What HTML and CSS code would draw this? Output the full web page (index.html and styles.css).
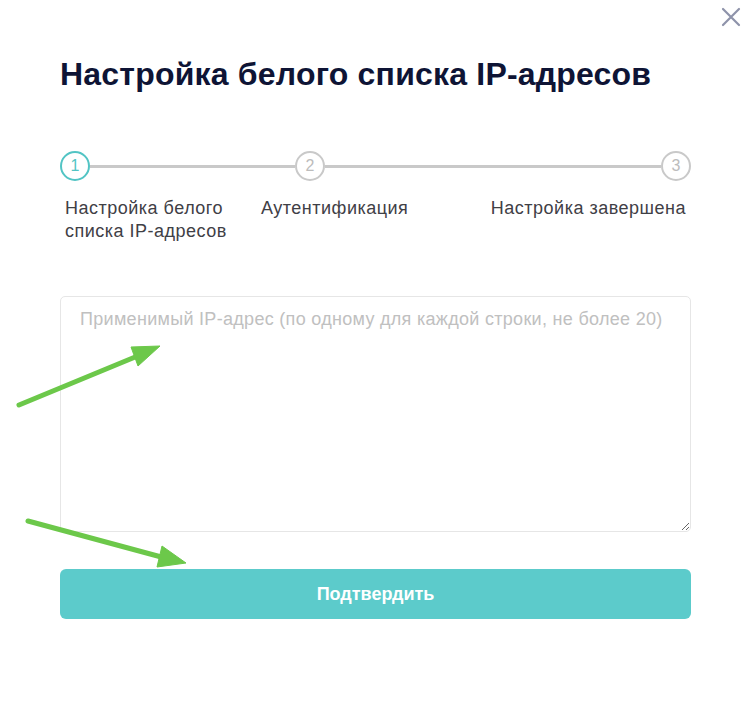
FILE: index.html
```html
<!DOCTYPE html>
<html lang="ru">
<head>
<meta charset="utf-8">
<title>Настройка белого списка IP-адресов</title>
<link rel="stylesheet" href="styles.css">
</head>
<body>
<div class="modal">
  <button class="close" aria-label="Закрыть">
    <svg width="20" height="20" viewBox="0 0 20 20"><path d="M2 2L18 18M18 2L2 18" stroke="#8e93aa" stroke-width="2.2" stroke-linecap="round" fill="none"/></svg>
  </button>
  <h1 class="title">Настройка белого списка IP-адресов</h1>

  <div class="steps">
    <div class="track">
      <span class="dot active">1</span>
      <span class="line first"></span>
      <span class="dot">2</span>
      <span class="line"></span>
      <span class="dot">3</span>
    </div>
    <div class="labels">
      <div class="label l1">Настройка белого<br>списка IP-адресов</div>
      <div class="label l2">Аутентификация</div>
      <div class="label l3">Настройка завершена</div>
    </div>
  </div>

  <textarea class="ips" placeholder="Применимый IP-адрес (по одному для каждой строки, не более 20)"></textarea>

  <button class="confirm">Подтвердить</button>
</div>

<svg class="arrows" width="750" height="720" viewBox="0 0 750 720">
  <g fill="#6cc84a" stroke="#6cc84a">
    <line x1="19" y1="405" x2="140" y2="355" stroke-width="5" stroke-linecap="round"/>
    <polygon points="160,346 131,347 138,366" stroke-width="1" stroke-linejoin="round"/>
    <line x1="28" y1="521" x2="165" y2="558" stroke-width="5" stroke-linecap="round"/>
    <polygon points="186,563 162,546 157,567" stroke-width="1" stroke-linejoin="round"/>
  </g>
</svg>
</body>
</html>
```

FILE: styles.css
```css
html, body {
  margin: 0;
  padding: 0;
  background: #ffffff;
}

body {
  font-family: "Liberation Sans", Arial, sans-serif;
  width: 750px;
  height: 720px;
  position: relative;
  overflow: hidden;
}

.modal {
  padding: 0 59px 0 60px;
  position: relative;
}

.close {
  position: absolute;
  top: 7px;
  right: 9px;
  width: 20px;
  height: 20px;
  padding: 0;
  border: 0;
  background: none;
}

.title {
  margin: 0;
  padding-top: 54px;
  font-size: 32px;
  line-height: 40px;
  font-weight: 700;
  color: #0e1435;
  letter-spacing: 0.2px;
}

.steps {
  margin-top: 57px;
}

.track {
  display: flex;
  align-items: center;
}

.dot {
  box-sizing: border-box;
  width: 30px;
  height: 30px;
  border-radius: 50%;
  border: 2px solid #c9c9c9;
  color: #bcbcbc;
  font-size: 16px;
  display: flex;
  align-items: center;
  justify-content: center;
  flex: none;
}

.dot.active {
  border-color: #52c4c4;
  color: #52c4c4;
}

.line {
  height: 3px;
  background: #c9c9c9;
  flex: 1;
}

.line.first {
  flex: none;
  width: 205px;
}

.labels {
  display: flex;
  margin-top: 16px;
  color: #3f4046;
  font-size: 18px;
  line-height: 23px;
  letter-spacing: 0.5px;
}

.label.l1 {
  width: 196px;
  padding-left: 5px;
}

.label.l3 {
  margin-left: auto;
  padding-right: 5px;
}

.ips {
  display: block;
  box-sizing: border-box;
  width: 100%;
  height: 236px;
  margin-top: 53px;
  padding: 10px 19px;
  border: 1px solid #e6e6e6;
  border-radius: 5px;
  font-family: inherit;
  font-size: 18px;
  letter-spacing: 0.3px;
  line-height: 24px;
  color: #333;
  resize: vertical;
  outline: none;
}

.ips::placeholder {
  color: #c0c0c0;
}

.confirm {
  display: block;
  width: 100%;
  height: 50px;
  margin-top: 37px;
  border: 0;
  border-radius: 6px;
  background: #5ccbcb;
  color: #ffffff;
  font-family: inherit;
  font-size: 18px;
  font-weight: 700;
}

.arrows {
  position: absolute;
  left: 0;
  top: 0;
  pointer-events: none;
}
```
